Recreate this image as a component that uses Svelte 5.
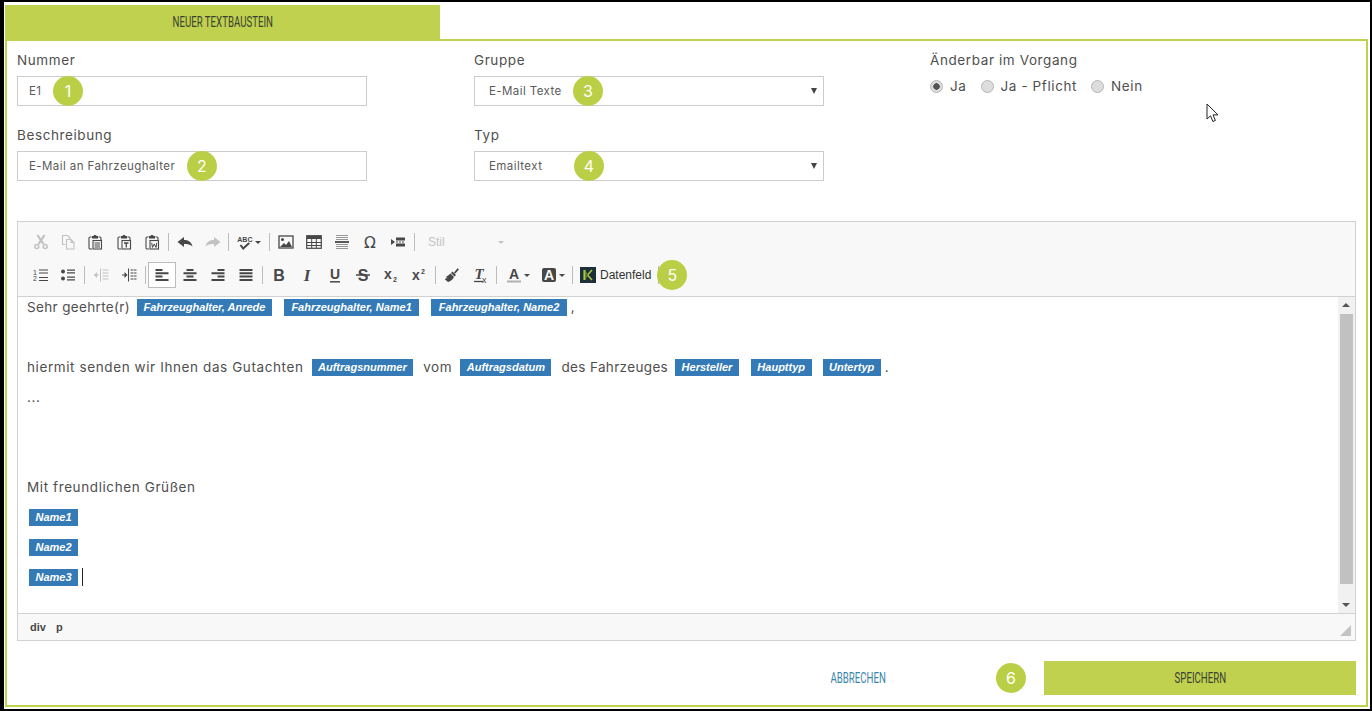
<script>
	const clip = '<path class="f" d="M5 2h1.500c.2-1.300 2.800-1.300 3 0H11v2.500H5z"/><path d="M4.500 3H3.200C2.500 3 2 3.500 2 4.200V14c0 .6.500 1 1.200 1H5M11.500 3h1.300c.7 0 1.200.5 1.200 1.200V6" stroke-width="1.100"/><rect x="6" y="6.500" width="8.500" height="8.500" fill="#f8f8f8" stroke-width="1.100"/>';

	const icons = {
		cut: '<path d="M4.400 1 10.400 9.800M11.600 1 5.600 9.800" stroke-width="2.200"/><circle cx="3.800" cy="12.600" r="2" stroke-width="1.500"/><circle cx="12.200" cy="12.600" r="2" stroke-width="1.500"/>',
		copy: '<path d="M5 10.500H2.500v-9h5l2.500 2.500v1M6.500 5.500h4.500l3 3v6.500H6.500zM11 5.500v3h3" stroke-width="1.100"/>',
		paste: clip + '<path d="M7.500 9h5.500M7.500 11h5.500M7.500 13h5.500" stroke-width="1.100"/>',
		pasteT: clip + '<path d="M8 9h4.500M10.250 9v4.500" stroke-width="1.300"/>',
		pasteW: clip + '<path d="M7.700 8.800l.8 4.600 1.750-3.400 1.750 3.400.8-4.600" stroke-width="1"/>',
		undo: '<path class="f" d="M0.500 8 7 3v3c4 0 7.500 1.600 8.500 6.500C13.500 10.500 10.500 10 7 10v3z"/>',
		redo: '<path class="f" d="M15.500 8 9 3v3c-4 0-7.500 1.600-8.500 6.500C2.500 10.500 5.500 10 9 10v3z"/>',
		spell: '<text x="0.300" y="7.500" class="t" font-size="7" font-weight="700">ABC</text><path d="M3.500 11l2.700 3.500 6-5.500" stroke-width="2"/>',
		image: '<rect x="1" y="2" width="14" height="12" stroke-width="1.300"/><circle class="f" cx="4.500" cy="5.500" r="1.500"/><path class="f" d="M2 13l4-4 2 2 3-4 3 6z"/>',
		table: '<rect x="0.700" y="1.700" width="14.600" height="12.600" stroke-width="1.200"/><path class="f" d="M1 2h14v3H1z"/><path d="M1 8.500h14M1 11.500h14M5.700 5v9M10.300 5v9" stroke-width="1"/>',
		hr: '<path d="M2 1.500h12M2 3.500h12M2 5.500h12M2 10.500h12M2 12.500h12M2 14.500h12" stroke-width="1" opacity=".55"/><path d="M1 8h14" stroke-width="1.800"/>',
		omega: '<text x="8" y="13.500" text-anchor="middle" class="t deja" font-size="15.500">Ω</text>',
		block: '<path class="f" d="M1 5l4 3-4 3z"/><path class="f" d="M6 3.500h9v3H6zM6 9.500h9v3H6z"/><path d="M6 8h9" stroke-width="1" stroke-dasharray="2 1"/>',
		ol: '<text x="0" y="7.500" class="t" font-size="7">1</text><text x="0" y="14" class="t" font-size="7">2</text><path d="M6 3h9M6 6h9M6 10.500h9M6 13.500h9" stroke-width="1.200"/>',
		ul: '<circle class="f" cx="3" cy="4.500" r="2"/><circle class="f" cx="3" cy="11.500" r="2"/><path d="M7 3.200h8M7 5.800h8M7 10.200h8M7 12.800h8" stroke-width="1.300"/>',
		outdent: '<path d="M7.500 1.500v13" stroke-width="1"/><path d="M9.500 3h6M9.500 6h6M9.500 9h6M9.500 12h6M1 8h5" stroke-width="1"/><path class="f" d="M1 8l3-3v6z"/>',
		indent: '<path d="M7.500 1.500v13" stroke-width="1"/><path d="M9.500 3h6M9.500 6h6M9.500 9h6M9.500 12h6M1 8h4" stroke-width="1" stroke-dasharray="3 .6"/><path class="f" d="M6.500 8l-3-3v6z"/>',
		left: '<path d="M1.500 3h7M1.500 6.300h13M1.500 9.600h7M1.500 12.900h13" stroke-width="2"/>',
		center: '<path d="M4.500 3h7M1.500 6.300h13M4.500 9.600h7M1.500 12.900h13" stroke-width="2"/>',
		right: '<path d="M7.500 3h7M1.500 6.300h13M7.500 9.600h7M1.500 12.900h13" stroke-width="2"/>',
		justify: '<path d="M1.500 3h13M1.500 6.300h13M1.500 9.600h13M1.500 12.900h13" stroke-width="2"/>',
		bold: '<text x="8" y="13.500" text-anchor="middle" class="t" font-size="16" font-weight="700">B</text>',
		italic: '<text x="8" y="13.500" text-anchor="middle" class="t serif" font-size="17" font-weight="700" font-style="italic">I</text>',
		underline: '<text x="8" y="12" text-anchor="middle" class="t" font-size="14" font-weight="700">U</text><path d="M3 14.800h10" stroke-width="1.500"/>',
		strike: '<text x="8" y="13.500" text-anchor="middle" class="t" font-size="16" font-weight="700">S</text><path d="M1 8h14" stroke-width="1.500"/>',
		sub: '<text x="1" y="12" class="t" font-size="14" font-weight="700">x</text><text x="10" y="15" class="t" font-size="7" font-weight="700">2</text>',
		sup: '<text x="1" y="13" class="t" font-size="14" font-weight="700">x</text><text x="10" y="7" class="t" font-size="7" font-weight="700">2</text>',
		brush: '<path class="f" d="M10 5.500 13.500 1.200 15 2.500 11 6.800z"/><path class="f" d="M8.500 4.500l3.500 3.500-1.500 1.500-3.500-3.500zM6.500 6.500l3.500 3.500c-1 2-3 4-5.500 5-.8-.2-1.500-.6-2.300-1.400C1.500 13 1 12.500.800 12c1-.300 2-1 2.500-2-.800.300-1.500.400-2 .300 2-1 3.800-2.300 5.200-3.800z"/>',
		clear: '<text x="7" y="12" text-anchor="middle" class="t serif" font-size="15" font-weight="700" font-style="italic">T</text><path d="M2 14.500h9" stroke-width="1.300"/><text x="10" y="15.500" class="t" font-size="9">x</text>',
		color: '<text x="8" y="11.500" text-anchor="middle" class="t" font-size="14" font-weight="700">A</text><path d="M1 14.500h14" stroke-width="2" opacity=".4"/>',
		bg: '<rect class="f" x="1" y="1" width="14" height="14" rx="2"/><text x="8" y="13" text-anchor="middle" class="t inv" font-size="14" font-weight="700">A</text>',
	};

	const row1 = [
		{ i: 'cut', w: 27, off: true }, { i: 'copy', w: 27, off: true },
		{ i: 'paste', w: 28 }, { i: 'pasteT', w: 29 }, { i: 'pasteW', w: 28 }, { sep: true },
		{ i: 'undo', w: 28 }, { i: 'redo', w: 27, off: true }, { sep: true },
		{ i: 'spell', w: 36, caret: true }, { sep: true },
		{ i: 'image', w: 28 }, { i: 'table', w: 28 }, { i: 'hr', w: 28 }, { i: 'omega', w: 28 }, { i: 'block', w: 28 }, { sep: true },
	];
	const row2 = [
		{ i: 'ol', w: 27 }, { i: 'ul', w: 28 }, { sep: true },
		{ i: 'outdent', w: 28, off: true }, { i: 'indent', w: 28 }, { sep: true },
		{ i: 'left', w: 28, on: true }, { i: 'center', w: 28 }, { i: 'right', w: 28 }, { i: 'justify', w: 28 }, { sep: true },
		{ i: 'bold', w: 28 }, { i: 'italic', w: 28 }, { i: 'underline', w: 28 }, { i: 'strike', w: 28 }, { i: 'sub', w: 28 }, { i: 'sup', w: 28 }, { sep: true },
		{ i: 'brush', w: 28 }, { i: 'clear', w: 28 }, { sep: true },
		{ i: 'color', w: 37, caret: true }, { i: 'bg', w: 34, caret: true }, { sep: true },
	];
</script>

{#snippet tools(items)}
	{#each items as b}
		{#if b.sep}
			<span class="sep"></span>
		{:else}
			<span class="btn" class:off={b.off} class:on={b.on} style="width:{b.w}px">
				<svg width="16" height="16" viewBox="0 0 16 16">{@html icons[b.i]}</svg>
				{#if b.caret}<span class="caret"></span>{/if}
			</span>
		{/if}
	{/each}
{/snippet}

<div class="screen">
	<div class="tab"><span class="cond">NEUER TEXTBAUSTEIN</span></div>
	<div class="panel">
		<div class="fields">
			<div class="col">
				<div class="field">
					<label for="nr">Nummer</label>
					<div class="box"><input id="nr" value="E1" readonly /><span class="num n1">1</span></div>
				</div>
				<div class="field">
					<label for="bes">Beschreibung</label>
					<div class="box"><input id="bes" value="E-Mail an Fahrzeughalter" readonly /><span class="num n2">2</span></div>
				</div>
			</div>
			<div class="col">
				<div class="field">
					<span class="lbl">Gruppe</span>
					<div class="box sel">E-Mail Texte<span class="arrow"></span><span class="num n3">3</span></div>
				</div>
				<div class="field">
					<span class="lbl">Typ</span>
					<div class="box sel">Emailtext<span class="arrow"></span><span class="num n4">4</span></div>
				</div>
			</div>
			<div class="col">
				<span class="lbl">Änderbar im Vorgang</span>
				<div class="radios">
					<span class="radio"><i class="dot checked"></i>Ja</span>
					<span class="radio"><i class="dot"></i>Ja - Pflicht</span>
					<span class="radio"><i class="dot"></i>Nein</span>
				</div>
			</div>
		</div>

		<div class="editor">
			<div class="toolbar">
				<div class="row">
					{@render tools(row1)}
					<span class="combo">Stil<span class="caret"></span></span>
				</div>
				<div class="row">
					{@render tools(row2)}
					<span class="datafield">
						<svg width="16" height="16" viewBox="0 0 16 16">
							<rect width="16" height="16" fill="#1d3038" />
							<path d="M4.500 3v10" fill="none" stroke="#a8c63f" stroke-width="2.200" />
							<path d="M12 3 7.500 8l4.500 5" fill="none" stroke="#a8c63f" stroke-width="1.600" />
							<path d="M5.500 5l2 3-2 3" fill="none" stroke="#6e8a3a" stroke-width="1.200" />
						</svg>
						Datenfeld
					</span>
					<span class="sep"></span>
					<span class="num tool-num">5</span>
				</div>
			</div>
			<div class="body">
				<div class="text">
					<p><span class="tight">Sehr geehrte(r)</span><b class="m7">Fahrzeughalter, Anrede</b><b class="m12 wide">Fahrzeughalter, Name1</b><b class="m12 wide">Fahrzeughalter, Name2</b><span class="m4">,</span></p>
					<p></p>
					<p>hiermit senden wir Ihnen das Gutachten<b class="m8">Auftragsnummer</b><span class="m10">vom</span><b class="m8">Auftragsdatum</b><span class="m10 tight">des Fahrzeuges</span><b class="m7">Hersteller</b><b class="m12">Haupttyp</b><b class="m11">Untertyp</b><span class="m4">.</span></p>
					<p>...</p>
					<p></p>
					<p></p>
					<p>Mit freundlichen Grüßen</p>
					<p><b class="m2">Name1</b></p>
					<p><b class="m2">Name2</b></p>
					<p><b class="m2">Name3</b><span class="cursor"></span></p>
				</div>
				<div class="scroll">
					<span class="up"></span>
					<span class="thumb"></span>
					<span class="down"></span>
				</div>
			</div>
			<div class="status">
				<span>div</span><span>p</span>
				<svg class="grip" width="11" height="11" viewBox="0 0 11 11"><path d="M11 0v11H0z" fill="#c4c4c4" /></svg>
			</div>
		</div>

		<div class="actions">
			<span class="cancel cond">ABBRECHEN</span>
			<span class="num act-num">6</span>
			<span class="save"><span class="cond">SPEICHERN</span></span>
		</div>
	</div>
	<svg class="pointer" width="14" height="20" viewBox="0 0 14 20">
		<path d="M1 1v15l3.500-3.200 2.400 5.700 2.500-1-2.400-5.600H12z" fill="#fff" stroke="#222" stroke-width="1" />
	</svg>
</div>

<style>
	:global(body) {
		margin: 0;
		background: #fff;
	}
	.screen {
		position: relative;
		box-sizing: border-box;
		width: 1372px;
		height: 711px;
		border: solid #000;
		border-width: 2px 2px 2px 4px;
		padding: 3px 2px 2px 1px;
		display: flex;
		flex-direction: column;
		overflow: hidden;
		font-family: Inter, "Liberation Sans", sans-serif;
		color: #4f4f4f;
	}
	.cond {
		display: inline-block;
		font-family: Roboto, "Liberation Sans", sans-serif;
		font-size: 14px;
		color: #3a4230;
		transform: scaleX(0.69);
		white-space: nowrap;
	}
	.tab {
		width: 435px;
		height: 34px;
		flex: none;
		background: #bfd14f;
		display: flex;
		align-items: center;
		justify-content: center;
	}
	.panel {
		flex: 1;
		border: 2px solid #bfd14f;
		padding: 10px 10px 0;
		display: flex;
		flex-direction: column;
	}
	.fields {
		display: grid;
		grid-template-columns: 457px 456px 1fr;
		height: 170px;
		flex: none;
	}
	.field {
		margin-bottom: 20px;
	}
	label,
	.lbl {
		display: block;
		height: 25px;
		line-height: 18px;
		font-size: 13.500px;
		letter-spacing: 0.6px;
		color: #4f4f4f;
	}
	.box {
		position: relative;
		box-sizing: border-box;
		width: 350px;
		height: 30px;
		border: 1px solid #ccc;
	}
	input {
		box-sizing: border-box;
		width: 100%;
		height: 100%;
		border: 0;
		outline: 0;
		padding: 0 11px;
		font: 11.500px Inter, "Liberation Sans", sans-serif;
		letter-spacing: 0.42px;
		color: #5a5a5a;
		background: none;
	}
	.sel {
		padding-left: 14px;
		line-height: 28px;
		font-size: 11.500px;
		letter-spacing: 0.42px;
		color: #5a5a5a;
	}
	.arrow {
		position: absolute;
		right: 6px;
		top: 11px;
		width: 0;
		height: 0;
		border: 3px solid transparent;
		border-top: 6px solid #444;
		border-bottom: 0;
	}
	.num {
		position: absolute;
		top: -1px;
		width: 30px;
		height: 30px;
		border-radius: 50%;
		background: #bbcf46;
		color: #fff;
		text-align: center;
		letter-spacing: 0;
		font: 16px/30px Inter, "Liberation Sans", sans-serif;
	}
	.n1 {
		left: 35px;
	}
	.n2 {
		left: 169px;
	}
	.n3 {
		left: 98px;
	}
	.n4 {
		left: 99px;
	}
	.radios {
		display: flex;
		gap: 14px;
		font-size: 13.500px;
		letter-spacing: 0.6px;
		line-height: 20px;
		color: #4f4f4f;
	}
	.radio {
		display: flex;
		align-items: center;
		gap: 7px;
	}
	.dot {
		box-sizing: border-box;
		width: 13px;
		height: 13px;
		border-radius: 50%;
		border: 1px solid #b5b5b5;
		background: #ddd;
	}
	.dot.checked {
		background: radial-gradient(circle, #555 0 3px, #ddd 3.500px);
	}
	.editor {
		box-sizing: border-box;
		width: 1339px;
		height: 420px;
		flex: none;
		border: 1px solid #d1d1d1;
		display: flex;
		flex-direction: column;
	}
	.toolbar {
		box-sizing: border-box;
		height: 75px;
		flex: none;
		padding: 7px 0 0 9px;
		background: #f8f8f8;
		border-bottom: 1px solid #d1d1d1;
		display: flex;
		flex-direction: column;
		gap: 7px;
	}
	.row {
		position: relative;
		height: 26px;
		display: flex;
		align-items: center;
	}
	.btn {
		box-sizing: border-box;
		height: 26px;
		flex: none;
		display: flex;
		align-items: center;
		justify-content: center;
		gap: 2px;
		color: #474747;
	}
	.btn.on {
		border: 1px solid #bcbcbc;
		background: #fff;
	}
	.btn.off {
		opacity: 0.3;
	}
	.btn :global(svg) {
		fill: none;
		stroke: currentColor;
	}
	.btn :global(.f) {
		fill: currentColor;
		stroke: none;
	}
	.btn :global(.t) {
		fill: currentColor;
		stroke: none;
		font-family: "Liberation Sans", sans-serif;
	}
	.btn :global(.serif) {
		font-family: "Liberation Serif", serif;
	}
	.btn :global(.deja) {
		font-family: "DejaVu Sans", sans-serif;
	}
	.btn :global(.inv) {
		fill: #f8f8f8;
	}
	.caret {
		width: 0;
		height: 0;
		border: 3px solid transparent;
		border-top-color: currentColor;
		border-bottom: 0;
	}
	.sep {
		width: 1px;
		height: 18px;
		margin: 0 2px 0 2px;
		flex: none;
		background: #bcbcbc;
	}
	.combo {
		width: 92px;
		padding: 0 5px 0 11px;
		flex: none;
		box-sizing: border-box;
		display: flex;
		align-items: center;
		justify-content: space-between;
		font: 12px "Liberation Sans", sans-serif;
		color: #c4c4c4;
	}
	.datafield {
		display: flex;
		align-items: center;
		gap: 4px;
		padding: 0 5px;
		font: 12px "Liberation Sans", sans-serif;
		color: #333;
	}
	.tool-num {
		position: static;
		margin-left: -4px;
		flex: none;
	}
	.body {
		flex: 1;
		display: flex;
		background: #fff;
		min-height: 0;
	}
	.text {
		flex: 1;
		padding-left: 9px;
		font-size: 13.500px;
		letter-spacing: 0.6px;
		color: #4f4f4f;
	}
	p {
		margin: 0 0 10px;
		height: 20px;
		line-height: 20px;
		display: flex;
		align-items: center;
	}
	p b {
		display: inline-block;
		height: 17px;
		padding: 0 6.500px;
		background: #337ab7;
		color: #fff;
		font: italic 700 11px/17px "Liberation Sans", sans-serif;
		letter-spacing: 0;
	}
	p b.wide {
		padding: 0 7.500px;
	}
	.tight {
		letter-spacing: 0.35px;
	}
	.m2 {
		margin-left: 2px;
	}
	.m4 {
		margin-left: 4px;
	}
	.m7 {
		margin-left: 7px;
	}
	.m8 {
		margin-left: 8px;
	}
	.m10 {
		margin-left: 10px;
	}
	.m11 {
		margin-left: 11px;
	}
	.m12 {
		margin-left: 12px;
	}
	.cursor {
		width: 1px;
		height: 18px;
		margin-left: 4px;
		background: #222;
	}
	.scroll {
		position: relative;
		width: 17px;
		flex: none;
		background: #f1f1f1;
	}
	.thumb {
		position: absolute;
		left: 2px;
		right: 2px;
		top: 17px;
		height: 270px;
		background: #c1c1c1;
	}
	.up,
	.down {
		position: absolute;
		left: 4px;
		width: 0;
		height: 0;
		border: 4px solid transparent;
	}
	.up {
		top: 6px;
		border-top: 0;
		border-bottom: 4px solid #555;
	}
	.down {
		bottom: 6px;
		border-bottom: 0;
		border-top: 4px solid #555;
	}
	.status {
		position: relative;
		box-sizing: border-box;
		height: 27px;
		flex: none;
		border-top: 1px solid #d1d1d1;
		background: #f8f8f8;
		padding-left: 12px;
		display: flex;
		align-items: center;
		gap: 10px;
		font: 700 11px "Liberation Sans", sans-serif;
		color: #484848;
	}
	.grip {
		position: absolute;
		right: 4px;
		bottom: 4px;
	}
	.actions {
		position: relative;
		margin-top: 20px;
		height: 34px;
		display: flex;
		align-items: center;
		justify-content: flex-end;
	}
	.cancel {
		position: absolute;
		left: 801px;
		color: #3a85ad;
	}
	.act-num {
		left: 979px;
		top: 2px;
	}
	.save {
		width: 312px;
		height: 34px;
		background: #bfd14f;
		display: flex;
		align-items: center;
		justify-content: center;
	}
	.pointer {
		position: absolute;
		left: 1202px;
		top: 101px;
	}
</style>
